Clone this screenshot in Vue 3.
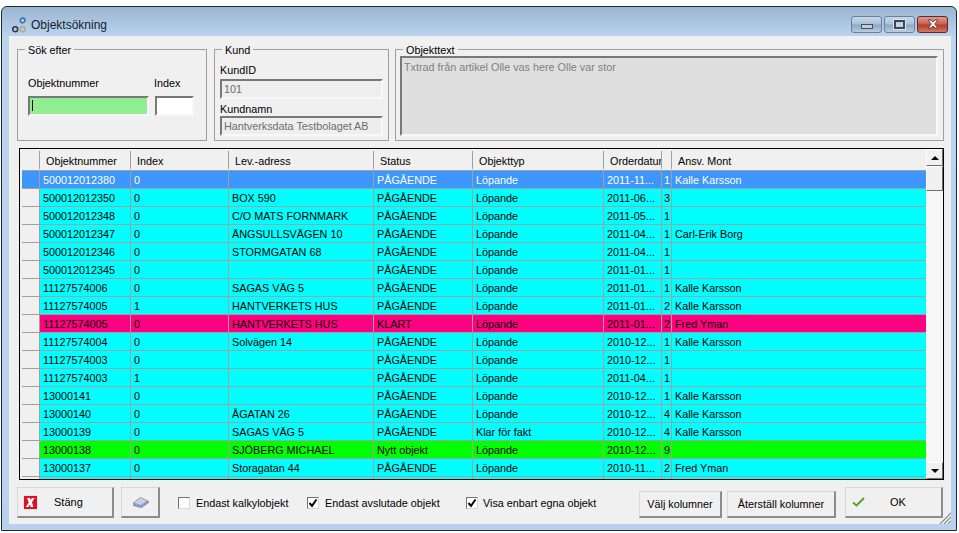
<script setup>
const PG = 'PÅGÅENDE';
const LP = 'Löpande';

const columns = ['Objektnummer', 'Index', 'Lev.-adress', 'Status', 'Objekttyp', 'Orderdatum', '', 'Ansv. Mont'];

const rows = [
  { nr: '500012012380', idx: '0', adr: '', status: PG, typ: LP, datum: '2011-11...', n: '1', ansv: 'Kalle Karsson', kind: 'selected' },
  { nr: '500012012350', idx: '0', adr: 'BOX 590', status: PG, typ: LP, datum: '2011-06...', n: '3', ansv: '' },
  { nr: '500012012348', idx: '0', adr: 'C/O MATS FORNMARK', status: PG, typ: LP, datum: '2011-05...', n: '1', ansv: '' },
  { nr: '500012012347', idx: '0', adr: 'ÄNGSULLSVÄGEN 10', status: PG, typ: LP, datum: '2011-04...', n: '1', ansv: 'Carl-Erik Borg' },
  { nr: '500012012346', idx: '0', adr: 'STORMGATAN 68', status: PG, typ: LP, datum: '2011-04...', n: '1', ansv: '' },
  { nr: '500012012345', idx: '0', adr: '', status: PG, typ: LP, datum: '2011-01...', n: '1', ansv: '' },
  { nr: '11127574006', idx: '0', adr: 'SAGAS VÄG 5', status: PG, typ: LP, datum: '2011-01...', n: '1', ansv: 'Kalle Karsson' },
  { nr: '11127574005', idx: '1', adr: 'HANTVERKETS HUS', status: PG, typ: LP, datum: '2011-01...', n: '2', ansv: 'Kalle Karsson' },
  { nr: '11127574005', idx: '0', adr: 'HANTVERKETS HUS', status: 'KLART', typ: LP, datum: '2011-01...', n: '2', ansv: 'Fred Yman', kind: 'done' },
  { nr: '11127574004', idx: '0', adr: 'Solvägen 14', status: PG, typ: LP, datum: '2010-12...', n: '1', ansv: 'Kalle Karsson' },
  { nr: '11127574003', idx: '0', adr: '', status: PG, typ: LP, datum: '2010-12...', n: '1', ansv: '' },
  { nr: '11127574003', idx: '1', adr: '', status: PG, typ: LP, datum: '2011-04...', n: '1', ansv: '' },
  { nr: '13000141', idx: '0', adr: '', status: PG, typ: LP, datum: '2010-12...', n: '1', ansv: 'Kalle Karsson' },
  { nr: '13000140', idx: '0', adr: 'ÅGATAN 26', status: PG, typ: LP, datum: '2010-12...', n: '4', ansv: 'Kalle Karsson' },
  { nr: '13000139', idx: '0', adr: 'SAGAS VÄG 5', status: PG, typ: 'Klar för fakt', datum: '2010-12...', n: '4', ansv: 'Kalle Karsson' },
  { nr: '13000138', idx: '0', adr: 'SJÖBERG MICHAEL', status: 'Nytt objekt', typ: LP, datum: '2010-12...', n: '9', ansv: '', kind: 'new' },
  { nr: '13000137', idx: '0', adr: 'Storagatan 44', status: PG, typ: LP, datum: '2010-11...', n: '2', ansv: 'Fred Yman' },
  { nr: '', idx: '', adr: '', status: '', typ: '', datum: '', n: '', ansv: '' },
];
</script>

<template>
  <div class="window">
    <div class="titlebar">
      <svg class="app-icon" width="16" height="16" viewBox="0 0 16 16">
        <circle cx="10.6" cy="3.4" r="2.4" fill="none" stroke="#2a6db0" stroke-width="1.3" />
        <circle cx="3.2" cy="12.3" r="2.5" fill="none" stroke="#33383c" stroke-width="1.5" />
        <circle cx="10.6" cy="12.3" r="2.5" fill="none" stroke="#b5a78c" stroke-width="1.4" />
      </svg>
      <span class="title">Objektsökning</span>
      <div class="caption-buttons">
        <div class="cap-btn"><span class="min-glyph"></span></div>
        <div class="cap-btn"><span class="max-glyph"></span></div>
        <div class="cap-btn close">
          <svg width="16" height="10" viewBox="0 0 16 10">
            <path d="M3 1h3l2 2 2-2h3l-3.3 4L13 9h-3L8 7 6 9H3l3.3-4z" fill="#f4f4f4" stroke="#5b2a24" stroke-width="0.8" />
          </svg>
        </div>
      </div>
    </div>

    <div class="client">
      <div class="top-row">
        <fieldset class="group search">
          <legend>Sök efter</legend>
          <div class="search-grid">
            <span class="lbl">Objektnummer</span>
            <span class="lbl index-lbl">Index</span>
            <div class="field green"><i class="caret"></i></div>
            <div class="field white"></div>
          </div>
        </fieldset>

        <fieldset class="group customer">
          <legend>Kund</legend>
          <span class="lbl">KundID</span>
          <div class="field disabled">101</div>
          <span class="lbl second">Kundnamn</span>
          <div class="field disabled">Hantverksdata Testbolaget AB</div>
        </fieldset>

        <fieldset class="group objtext">
          <legend>Objekttext</legend>
          <div class="field memo">Txtrad från artikel Olle vas here Olle var stor</div>
        </fieldset>
      </div>

      <div class="grid">
        <div class="table">
          <div class="row head">
            <div class="hcell"></div>
            <div v-for="c in columns" :key="c" class="hcell">{{ c }}</div>
          </div>
          <div v-for="(r, i) in rows" :key="i" class="row" :class="r.kind">
            <div class="cell rowhead"></div>
            <div class="cell">{{ r.nr }}</div>
            <div class="cell">{{ r.idx }}</div>
            <div class="cell">{{ r.adr }}</div>
            <div class="cell">{{ r.status }}</div>
            <div class="cell">{{ r.typ }}</div>
            <div class="cell">{{ r.datum }}</div>
            <div class="cell num">{{ r.n }}</div>
            <div class="cell">{{ r.ansv }}</div>
          </div>
        </div>
        <div class="scrollbar">
          <div class="sb-btn"><span class="arrow up"></span></div>
          <div class="sb-btn thumb"></div>
          <div class="sb-track"></div>
          <div class="sb-btn"><span class="arrow down"></span></div>
        </div>
      </div>

      <div class="bottom">
        <button class="btn big close-btn">
          <svg width="15" height="15" viewBox="0 0 15 15">
            <rect x="0.5" y="0.5" width="14" height="14" fill="#d9122a" stroke="#e9e4e4" />
            <path d="M4 3h3l.6 2L9 3h2.6L9 7.3l1.4 4.7H7.6L7 9.6 5.3 12H2.8l3-4.6z" fill="#fff" />
          </svg>
          <span>Stäng</span>
        </button>
        <button class="btn big book-btn">
          <svg width="18" height="12" viewBox="0 0 18 12">
            <path d="M1 6.5 8.5 1 17 5 9.5 11 1 8.5z" fill="#8f9cc4" />
            <path d="M2 6.4 8.6 2l6 2.8-5.6 4.2z" fill="#c9cfe0" />
            <path d="M1 8.5 9.5 11 17 5v1.5L9.5 12 1 9.8z" fill="#6f7ca6" />
          </svg>
        </button>
        <label class="check first"><span class="box"></span>Endast kalkylobjekt</label>
        <label class="check second"><span class="box on">
          <svg width="10" height="10" viewBox="0 0 10 10"><path d="M1.5 5 4 7.8 8.5 1.5" fill="none" stroke="#000" stroke-width="2" /></svg>
        </span>Endast avslutade objekt</label>
        <label class="check third"><span class="box on">
          <svg width="10" height="10" viewBox="0 0 10 10"><path d="M1.5 5 4 7.8 8.5 1.5" fill="none" stroke="#000" stroke-width="2" /></svg>
        </span>Visa enbart egna objekt</label>
        <button class="btn small choose">Välj kolumner</button>
        <button class="btn small reset">Återställ kolumner</button>
        <button class="btn big ok-btn">
          <svg width="13" height="10" viewBox="0 0 13 10"><path d="M1 5.5 4.5 8.5 12 1" fill="none" stroke="#5c9e2e" stroke-width="2" /></svg>
          <span>OK</span>
        </button>
      </div>

      <svg class="grip" width="12" height="12" viewBox="0 0 12 12">
        <path d="M12 1 1 12M12 5 5 12M12 9 9 12" stroke="#8a8a8a" stroke-width="1.2" />
      </svg>
    </div>
  </div>
</template>

<style scoped>
.window {
  box-sizing: border-box;
  width: 956px;
  height: 525px;
  margin: 6px 0 0 1px;
  border: 1px solid #1e2a32;
  border-radius: 6px 6px 0 0;
  background: linear-gradient(180deg, #9bb6d2 0, #bcd4ee 30px, #b9d1ec 100%);
  font-family: "Liberation Sans", Arial, sans-serif;
  font-size: 10.8px;
  color: #000;
  padding: 0 5px 6px 7px;
}

.titlebar {
  display: flex;
  align-items: center;
  box-sizing: border-box;
  height: 29px;
  padding-top: 6px;
}
.app-icon {
  margin: 0 3px 0 3px;
  flex: none;
}
.title {
  font-size: 12px;
  color: #14222e;
}
.caption-buttons {
  display: flex;
  gap: 2px;
  margin-left: auto;
  margin-right: 3px;
  margin-top: -1px;
}
.cap-btn {
  box-sizing: border-box;
  width: 31px;
  height: 17px;
  border: 1px solid #6c8199;
  border-radius: 3px;
  background: linear-gradient(180deg, #c6d8ea 0, #a9c2da 48%, #8aa6c2 52%, #b7cde2 100%);
  display: flex;
  align-items: center;
  justify-content: center;
}
.cap-btn.close {
  border-color: #5e2a2a;
  background: linear-gradient(180deg, #dc9a8e 0, #c9614f 48%, #b33a26 52%, #cf7a63 100%);
}
.min-glyph {
  width: 10px;
  height: 3px;
  margin-top: 5px;
  border: 1px solid #45505c;
  background: #c9ccd0;
}
.max-glyph {
  box-sizing: border-box;
  width: 11px;
  height: 9px;
  border: 2px solid #3a4652;
  outline: 1px solid #dfe6ec;
  background: #c5d3e0;
}

.client {
  position: relative;
  box-sizing: border-box;
  height: 488px;
  padding: 6px 0 0 8px;
  background: #f0f0f0;
}

.top-row {
  display: flex;
  height: 99px;
}
.group {
  box-sizing: border-box;
  height: 99px;
  margin: 0;
  min-width: 0;
  padding: 0;
  border: 1px solid #a0a0a0;
}
.group legend {
  height: 14px;
  padding: 0 3px;
  line-height: 17px;
}
.search {
  width: 190px;
  margin-right: 7px;
  padding: 20px 0 0 10px;
}
.search legend {
  margin-left: -3px;
}
.search-grid {
  display: grid;
  grid-template-columns: 121px 39px;
  column-gap: 6px;
  row-gap: 6px;
}
.index-lbl {
  margin-left: -1px;
}
.customer {
  width: 175px;
  margin-right: 6px;
  padding: 7px 0 0 5px;
}
.customer legend {
  margin-left: 2px;
}
.objtext {
  width: 549px;
  padding: 0 0 0 4px;
}
.objtext legend {
  margin-left: 3px;
}
.lbl {
  display: block;
  line-height: 14px;
}
.lbl.second {
  margin-top: 3px;
}

.field {
  box-sizing: border-box;
  height: 20px;
  border: 2px solid;
  border-color: #787878 #f8f8f8 #f8f8f8 #787878;
  padding-left: 2px;
  line-height: 16px;
  white-space: nowrap;
  overflow: hidden;
}
.customer .field {
  width: 163px;
  margin-top: 2px;
  background: #eeeeee;
  color: #6d6d6d;
}
.customer .lbl.second + .field {
  margin-top: 0;
}
.green {
  background: #90ee90;
}
.white {
  background: #fff;
}
.caret {
  display: block;
  width: 1px;
  height: 11px;
  margin-top: 2px;
  background: #000;
}
.memo {
  width: 538px;
  height: 80px;
  background: #dfdfdf;
  color: #808080;
  padding-top: 1px;
}

.grid {
  display: flex;
  box-sizing: border-box;
  width: 925px;
  height: 332px;
  margin: 7px 0 0 2px;
  border: 1px solid #000;
  background: #fff;
}
.table {
  width: 906px;
  padding-left: 2px;
  box-sizing: border-box;
  overflow: hidden;
  background: #f0f0f0;
}
.row {
  display: grid;
  grid-template-columns: 18px 91px 98px 145px 99px 131px 58px 10px 254px;
  height: 18px;
  background: #00ffff;
}
.row.head {
  height: 22px;
  background: #f0f0f0;
  border-bottom: 1px solid #a0a0a0;
  box-sizing: border-box;
  align-items: center;
}
.hcell {
  box-sizing: border-box;
  height: 18px;
  line-height: 20px;
  padding-left: 6px;
  border-right: 1px solid #a0a0a0;
  white-space: nowrap;
  overflow: hidden;
}
.hcell:last-child {
  border-right: 0;
}
.cell {
  box-sizing: border-box;
  padding: 1px 0 0 3px;
  line-height: 16px;
  border-right: 1px solid #a0a0a0;
  border-bottom: 1px solid #a0a0a0;
  white-space: nowrap;
  overflow: hidden;
}
.cell:last-child {
  border-right: 0;
}
.cell.num {
  padding: 1px 1px 0 0;
  text-align: right;
}
.rowhead {
  background: #f0f0f0;
}
.row.selected {
  background: #3c96fc;
  color: #fff;
}
.row.selected .rowhead {
  background: #3c96fc;
}
.row.done {
  background: #ff0080;
}
.row.new {
  background: #00ff00;
}

.scrollbar {
  display: flex;
  flex-direction: column;
  width: 17px;
}
.sb-btn {
  box-sizing: border-box;
  flex: none;
  height: 17px;
  background: #f0f0f0;
  border: 1px solid;
  border-color: #fff #6e6e6e #6e6e6e #fff;
  display: flex;
  align-items: center;
  justify-content: center;
}
.sb-btn.thumb {
  height: 25px;
}
.sb-track {
  flex: 1;
  background: repeating-conic-gradient(#f0f0f0 0 25%, #fff 0 50%) 0 0 / 2px 2px;
}
.arrow {
  width: 0;
  height: 0;
  border-left: 4px solid transparent;
  border-right: 4px solid transparent;
}
.arrow.up {
  border-bottom: 4px solid #000;
}
.arrow.down {
  border-top: 4px solid #000;
}

.bottom {
  display: flex;
  align-items: flex-end;
  height: 31px;
  margin-top: 7px;
}
.btn {
  box-sizing: border-box;
  margin: 0;
  padding: 0;
  background: #f0f0f0;
  border: 1px solid;
  border-color: #d8d8d8 #8c8c8c #8c8c8c #d8d8d8;
  border-right-width: 2px;
  border-bottom-width: 2px;
  font: inherit;
  color: #000;
  display: flex;
  align-items: center;
}
.big {
  height: 31px;
}
.small {
  height: 27px;
  justify-content: center;
}
.close-btn {
  width: 97px;
  padding-left: 5px;
}
.close-btn span {
  margin-left: 16px;
  font-size: 11px;
}
.book-btn {
  width: 39px;
  margin-left: 7px;
  padding-left: 10px;
}
.check {
  display: flex;
  align-items: center;
  height: 27px;
  margin-bottom: 2px;
  white-space: nowrap;
}
.check.first {
  width: 129px;
  margin-left: 18px;
}
.check.second {
  width: 159px;
}
.check.third {
  width: 173px;
}
.box {
  box-sizing: border-box;
  width: 12px;
  height: 12px;
  margin-right: 6px;
  border: 1px solid;
  border-color: #707070 #d8d8d8 #d8d8d8 #707070;
  background: #fff;
  display: flex;
  align-items: center;
  justify-content: center;
}
.third .box {
  margin-right: 5px;
}
.choose {
  width: 83px;
}
.reset {
  width: 109px;
  margin-left: 5px;
}
.ok-btn {
  width: 98px;
  margin-left: 9px;
  padding-left: 6px;
}
.ok-btn span {
  margin-left: 25px;
  font-size: 11px;
}
.grip {
  position: absolute;
  right: 0;
  bottom: 0;
}
</style>

<style>
html,
body {
  background: #fff;
}
</style>
